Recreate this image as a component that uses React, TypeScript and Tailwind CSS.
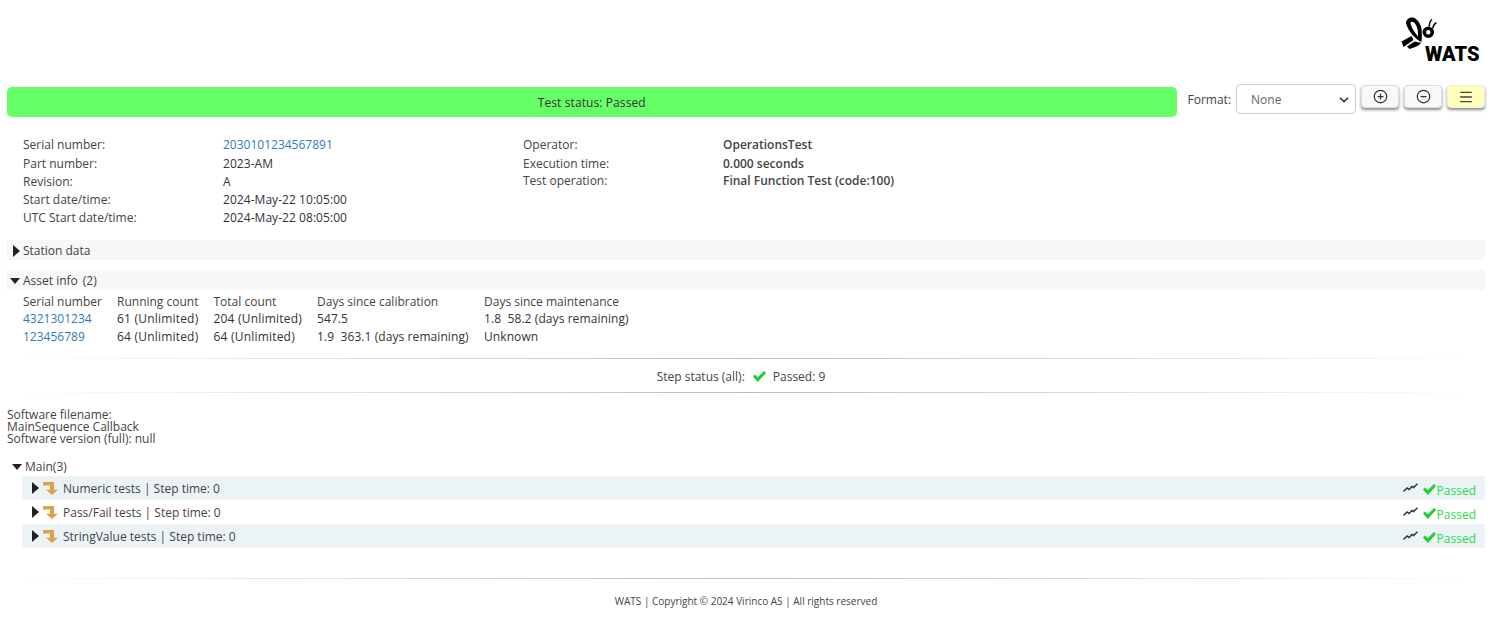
import React from "react";
import { CirclePlus, CircleMinus, Menu, ChevronDown } from "lucide-react";

const info = [
  ["Serial number:", "2030101234567891", "h-[19px]"],
  ["Part number:", "2023-AM", "h-[18px]"],
  ["Revision:", "A", "h-[18px]"],
  ["Start date/time:", "2024-May-22 10:05:00", "h-[18px]"],
  ["UTC Start date/time:", "2024-May-22 08:05:00", "h-[18px]"],
];

const info2 = [
  ["Operator:", "OperationsTest", "h-[19px]"],
  ["Execution time:", "0.000 seconds", "h-[17px]"],
  ["Test operation:", "Final Function Test (code:100)", "h-[18px]"],
];

const assets = [
  ["4321301234", "61 (Unlimited)", "204 (Unlimited)", "547.5", "1.8  58.2 (days remaining)"],
  ["123456789", "64 (Unlimited)", "64 (Unlimited)", "1.9  363.1 (days remaining)", "Unknown"],
];

const steps = [
  ["Numeric tests", "bg-[#ebf3f6]"],
  ["Pass/Fail tests", "bg-white"],
  ["StringValue tests", "bg-[#ebf3f6]"],
];

function TriRight() {
  return <span className="inline-block w-0 h-0 border-y-[6px] border-y-transparent border-l-[7px] border-l-[#222]" />;
}

function TriDown() {
  return <span className="inline-block w-0 h-0 border-x-[5.5px] border-x-transparent border-t-[6px] border-t-[#222]" />;
}

function Fade() {
  return <div className="h-px bg-linear-to-r from-white via-[#bdbdbd] to-white" />;
}

function StepIcon() {
  return (
    <svg width="15" height="13" viewBox="0 0 15 15" fill="#dfa245" preserveAspectRatio="none">
      <path d="M0 0H11V9H15L9 15L3 9H7V4H0Z" />
    </svg>
  );
}

function CheckMark({ className }: { className?: string }) {
  return (
    <svg width="13" height="11" viewBox="0 0 13 11" fill="#22cc33" className={className}>
      <path d="M0 5.500L2 3.500L4.800 6.300L11 0L13 2L4.800 11Z" />
    </svg>
  );
}

function Logo() {
  return (
    <div className="relative w-[82px] h-[48px]">
      <svg width="82" height="48" viewBox="0 0 82 48" className="absolute left-0 top-0">
        <path d="M7 7C7 3 11 1 14 1.500C18 2.500 22 8 22.500 13C23 17 23 21 22.500 26C16 23 9 15 7 7ZM11.500 7.500C12.500 11 15 16 19 20.500C19.500 15 18 9 15 6.500C13.500 5.500 11.500 5.500 11.500 7.500Z" fill="#000" fillRule="evenodd" />
        <path d="M2.500 25.500L12.500 20L14.500 24L4.500 31Z" fill="#000" />
        <path d="M8 30.500L15.500 25.500L22 26.700C21 29 17 31 10.500 33Z" fill="#000" />
        <circle cx="29.300" cy="16.300" r="4" fill="none" stroke="#000" strokeWidth="3.500" />
        <path d="M30.300 10.500C30.300 7.500 31 5 33 3.500M33.700 12.300C34 10 35 8 37.500 6.700" fill="none" stroke="#000" strokeWidth="1.500" />
      </svg>
      <span className="absolute left-[27px] top-[27px] text-[20px] leading-[22px] font-black text-black font-['Roboto',sans-serif] tracking-[0px] -translate-x-[1px]">WATS</span>
    </div>
  );
}

export default function App() {
  return (
    <div className="w-[1492px] h-[618px] bg-white text-[12px] text-[#444] font-['Open_Sans',sans-serif] overflow-hidden">
      {/* Header */}
      <div className="h-[84px] flex justify-end pt-[16px] pr-[11px]">
        <Logo />
      </div>

      {/* Status + toolbar */}
      <div className="flex items-start pl-[7px] pr-[7px]">
        <div className="w-[1170px] h-[30px] mt-[3px] pt-[2px] bg-[#66ff66] rounded-[5px] flex items-center justify-center text-[#333] tracking-[0.1px]">
          Test status: Passed
        </div>
        <span className="ml-[11px] mt-[8px] leading-[16px]">Format:</span>
        <div className="ml-[5px] w-[120px] h-[30px] pt-[2px] border border-[#ccc] rounded-[4px] flex items-center justify-between pl-[14px] pr-[4px] text-[#666]">
          <span>None</span>
          <ChevronDown size={14} strokeWidth={3} className="text-[#333]" />
        </div>
        <div className="ml-[5px] flex gap-[5px] mt-px">
          <button className="w-[38px] h-[23px] bg-[#f8f8f8] border border-[#ddd] rounded-[4px] shadow-[0_2px_3px_rgba(0,0,0,0.45)] flex items-center justify-center">
            <CirclePlus size={15} className="text-[#333]" />
          </button>
          <button className="w-[38px] h-[23px] bg-[#f8f8f8] border border-[#ddd] rounded-[4px] shadow-[0_2px_3px_rgba(0,0,0,0.45)] flex items-center justify-center">
            <CircleMinus size={15} className="text-[#333]" />
          </button>
          <button className="w-[38px] h-[23px] bg-[#ffffbb] border border-[#eee] rounded-[4px] shadow-[0_2px_3px_rgba(0,0,0,0.45)] flex items-center justify-center">
            <Menu size={16} className="text-[#444]" />
          </button>
        </div>
      </div>

      {/* Report info */}
      <div className="flex pl-[23px] mt-[19px]">
        <div className="w-[500px]">
          {info.map(([label, value, h], i) => (
            <div key={label} className={"flex leading-[18px] " + h}>
              <span className="w-[200px]">{label}</span>
              <span className={i === 0 ? "text-[#337ab7]" : "text-[#333] tracking-[0.05px]"}>{value}</span>
            </div>
          ))}
        </div>
        <div>
          {info2.map(([label, value, h]) => (
            <div key={label} className={"flex leading-[18px] " + h}>
              <span className="w-[200px]">{label}</span>
              <span className="text-[#444] font-semibold">{value}</span>
            </div>
          ))}
        </div>
      </div>

      {/* Station data */}
      <div className="mx-[7px] mt-[13px] h-[20px] pt-px bg-[#f7f7f7] flex items-center pl-[6px] gap-[3px]">
        <TriRight />
        <span className="mt-px">Station data</span>
      </div>

      {/* Asset info */}
      <div className="mx-[7px] mt-[10px] h-[20px] pt-px bg-[#f7f7f7] flex items-center pl-[3px] gap-[3px]">
        <TriDown />
        <span className="mt-px">Asset info</span>
        <span className="ml-[2px] mt-px">(2)</span>
      </div>
      <div className="pl-[23px] pt-[3px]">
        <div className="grid grid-cols-[94px_96.500px_103.500px_167px_auto] justify-start">
          {["Serial number", "Running count", "Total count", "Days since calibration", "Days since maintenance"].map((h) => (
            <div key={h} className="h-[17px] leading-[18px]">{h}</div>
          ))}
          {assets.map((row) =>
            row.map((cell, i) => (
              <div
                key={row[0] + i}
                className={
                  "h-[18px] leading-[18px] whitespace-pre " +
                  (i === 0 ? "text-[#337ab7]" : i < 3 ? "text-[#333] tracking-[0.2px]" : "text-[#333] tracking-[0.08px]")
                }
              >
                {cell}
              </div>
            ))
          )}
        </div>
      </div>

      {/* Step status */}
      <div className="mx-[7px] mt-[12px]">
        <Fade />
        <div className="h-[33px] pt-[2px] pr-[10px] flex items-center justify-center gap-[8px]">
          <span>Step status (all):</span>
          <CheckMark />
          <span className="-ml-[1px]">Passed: 9</span>
        </div>
        <Fade />
      </div>

      {/* Software */}
      <div className="pl-[7px] mt-[16px] leading-[12px]">
        <div>Software filename:</div>
        <div>MainSequence Callback</div>
        <div>Software version (full): null</div>
      </div>

      {/* Main */}
      <div className="mt-[13px] pl-[12px] h-[18px] flex items-center gap-[3px]">
        <TriDown />
        <span>Main(3)</span>
      </div>
      <div className="ml-[22px] mr-[7px]">
        {steps.map(([name, bg]) => (
          <div key={name} className={"h-[24px] flex items-center pl-[10px] pr-[9px] " + bg}>
            <TriRight />
            <span className="ml-[4px] mr-[5px] flex"><StepIcon /></span>
            <span className="mt-[1px]">{name} | Step time: 0</span>
            <div className="ml-auto flex items-center">
              <svg width="15" height="10" viewBox="0 0 15 10" fill="none" stroke="#333" strokeWidth="1.500">
                <path d="M0.500 8.500L4 5L6 6.500L9 3.500L10.500 4.500L14.500 0.800" />
              </svg>
              <CheckMark className="ml-[5px] mt-[2px]" />
              <span className="text-[#2bdc4a] mt-[6px] ml-[1px]">Passed</span>
            </div>
          </div>
        ))}
      </div>

      {/* Footer */}
      <div className="mx-[7px] mt-[30px]">
        <Fade />
        <div className="text-center text-[10px] mt-[15px] leading-[14px]">WATS | Copyright © 2024 Virinco AS | All rights reserved</div>
      </div>
    </div>
  );
}
